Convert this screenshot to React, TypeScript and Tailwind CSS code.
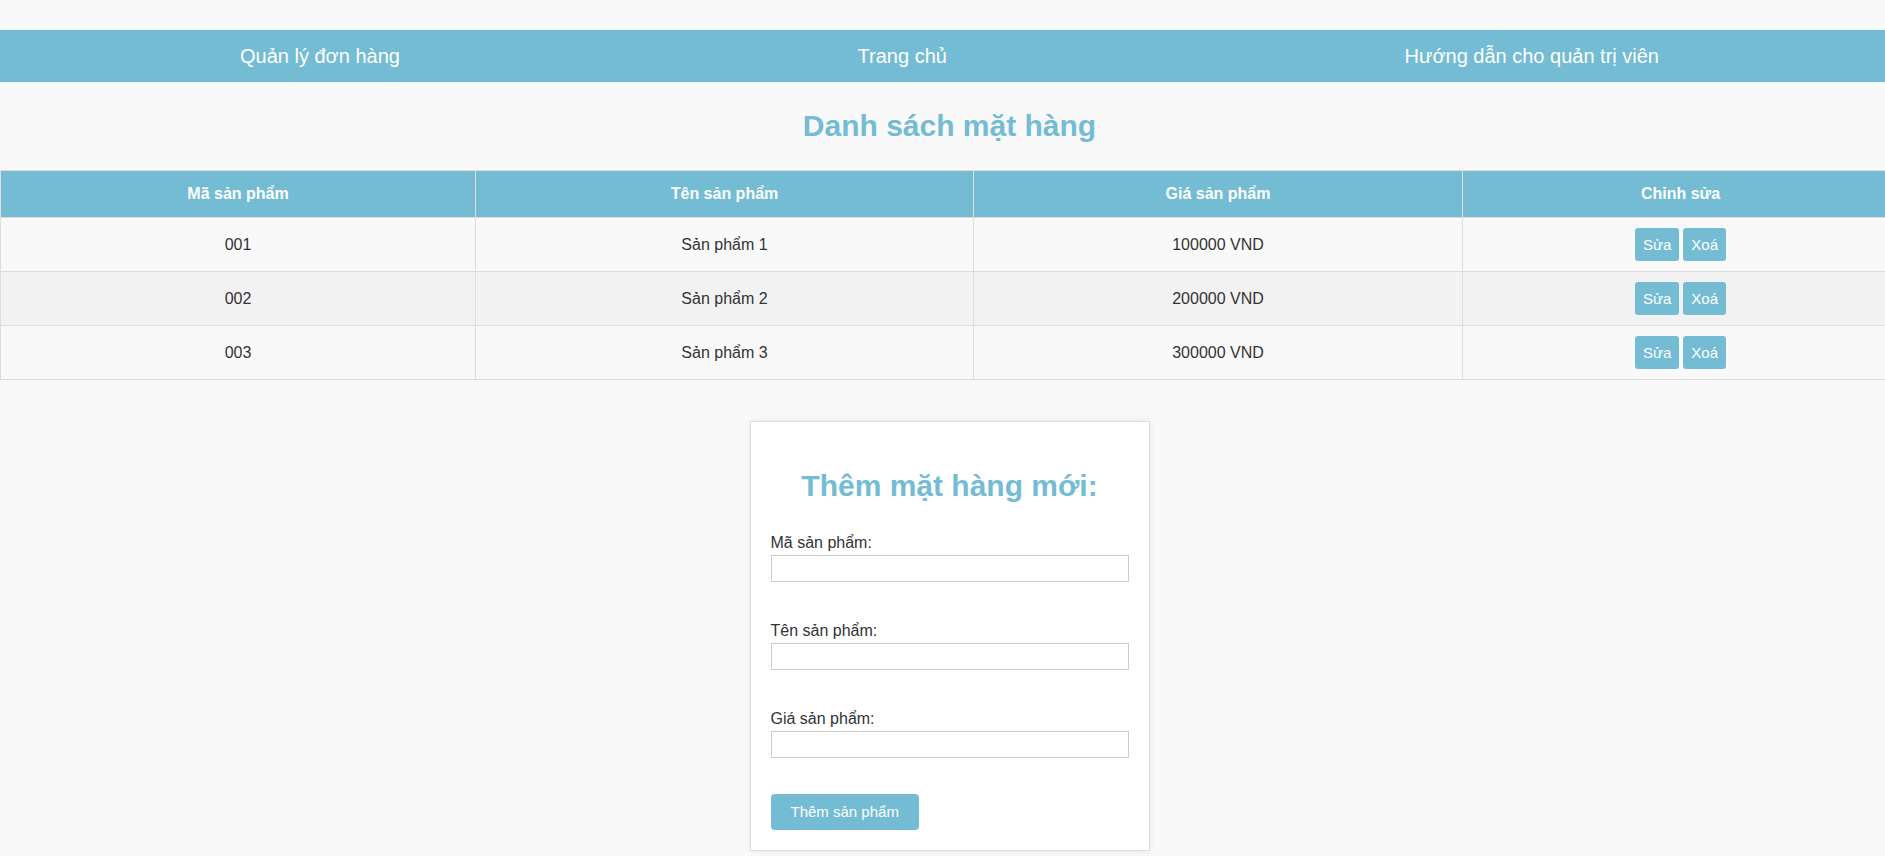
import React from 'react';

const NAV_LINKS = ['Quản lý đơn hàng', 'Trang chủ', 'Hướng dẫn cho quản trị viên'];

const PRODUCTS = [
  { id: '001', name: 'Sản phẩm 1', price: '100000 VND' },
  { id: '002', name: 'Sản phẩm 2', price: '200000 VND' },
  { id: '003', name: 'Sản phẩm 3', price: '300000 VND' },
];

const FIELDS = ['Mã sản phẩm:', 'Tên sản phẩm:', 'Giá sản phẩm:'];

export default function App() {
  return (
    <div className="min-h-screen w-full overflow-x-hidden bg-[#f9f9f9] font-['Liberation_Sans',Arial,sans-serif] text-[#333]">
      <div className="w-[1899px] pt-[30px] pb-[6px]">
        {/* Top nav */}
        <nav className="flex h-[52px] items-center justify-between bg-[#73bcd4] px-[240px]">
          {NAV_LINKS.map((label) => (
            <a key={label} href="#" className="text-[20px] leading-[23px] text-white">
              {label}
            </a>
          ))}
        </nav>

        <h1 className="my-[27px] text-center text-[30px] font-bold leading-[34px] text-[#73bcd4]">
          Danh sách mặt hàng
        </h1>

        {/* Product table */}
        <table className="w-full border-collapse text-center text-[16px]">
          <thead>
            <tr className="bg-[#73bcd4] text-white">
              <th className="w-[475px] border border-[#ddd] py-[14px] font-bold leading-[18px]">Mã sản phẩm</th>
              <th className="w-[498px] border border-[#ddd] py-[14px] font-bold leading-[18px]">Tên sản phẩm</th>
              <th className="w-[489px] border border-[#ddd] py-[14px] font-bold leading-[18px]">Giá sản phẩm</th>
              <th className="border border-[#ddd] py-[14px] font-bold leading-[18px]">Chỉnh sửa</th>
            </tr>
          </thead>
          <tbody>
            {PRODUCTS.map((p, i) => (
              <tr key={p.id} className={i % 2 === 1 ? 'bg-[#f2f2f2]' : 'bg-[#f9f9f9]'}>
                <td className="border border-[#ddd] py-[10px] leading-[18px]">{p.id}</td>
                <td className="border border-[#ddd] py-[10px] leading-[18px]">{p.name}</td>
                <td className="border border-[#ddd] py-[10px] leading-[18px]">{p.price}</td>
                <td className="border border-[#ddd] py-[10px]">
                  <div className="flex justify-center gap-[4px]">
                    <button className="h-[33px] rounded-[3px] bg-[#73bcd4] px-2 text-[15px] leading-[17px] text-white">
                      Sửa
                    </button>
                    <button className="h-[33px] rounded-[3px] bg-[#73bcd4] px-2 text-[15px] leading-[17px] text-white">
                      Xoá
                    </button>
                  </div>
                </td>
              </tr>
            ))}
          </tbody>
        </table>

        {/* Add product form */}
        <div className="mx-auto mt-[41px] w-[400px] border border-[#ddd] bg-white px-5 pt-[47px] pb-5 shadow-[0_0_8px_rgba(0,0,0,0.07)]">
          <h2 className="mb-[31px] text-center text-[30px] font-bold leading-[34px] text-[#73bcd4]">
            Thêm mặt hàng mới:
          </h2>
          <div className="flex flex-col gap-[40px]">
            {FIELDS.map((label) => (
              <label key={label} className="flex flex-col">
                <span className="text-[16px] leading-[18px] text-[#333]">{label}</span>
                <input type="text" className="mt-[3px] h-[27px] w-full border border-[#ccc] bg-white px-1 outline-none" />
              </label>
            ))}
          </div>
          <button className="mt-[36px] h-[36px] rounded-[4px] bg-[#73bcd4] px-[20px] text-[15px] text-white">
            Thêm sản phẩm
          </button>
        </div>
      </div>
    </div>
  );
}
